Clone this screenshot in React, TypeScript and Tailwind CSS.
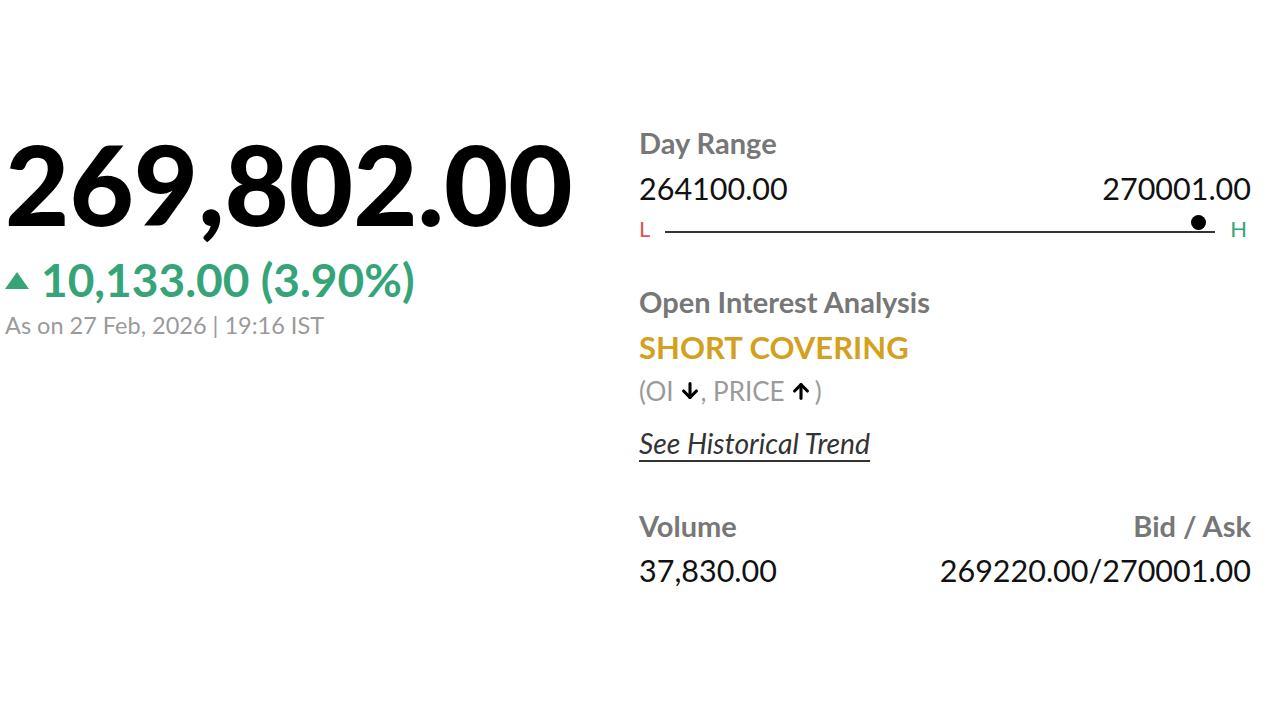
import React from "react";

const lato = { fontFamily: "Lato, 'Noto Sans', sans-serif" };

function ArrowDown() {
  return (
    <svg className="w-[22px] h-[22px] inline-block" viewBox="0 0 24 24" fill="none" stroke="#000" strokeWidth={3.4} strokeLinecap="round" strokeLinejoin="round">
      <path d="M12 4v15" />
      <path d="M5 12l7 7 7-7" />
    </svg>
  );
}

function ArrowUp() {
  return (
    <svg className="w-[22px] h-[22px] inline-block" viewBox="0 0 24 24" fill="none" stroke="#000" strokeWidth={3.4} strokeLinecap="round" strokeLinejoin="round">
      <path d="M12 20V5" />
      <path d="M5 12l7-7 7 7" />
    </svg>
  );
}

export default function App() {
  return (
    <div className="w-[1280px] h-[720px] bg-white text-black" style={lato}>
      <div className="flex pt-[118px] pl-[5px] pr-[29px]">
        {/* Left — price block */}
        <div className="w-[634px] shrink-0">
          <div className="text-[111px] font-black leading-[130px]">269,802.00</div>
          <div className="flex items-center gap-[12px] mt-[6px] text-[#35a478]">
            <span className="w-0 h-0 border-l-[12px] border-r-[12px] border-b-[17px] border-l-transparent border-r-transparent border-b-[#35a478]" />
            <span className="text-[46px] font-bold leading-[52px]">10,133.00 (3.90%)</span>
          </div>
          <div className="text-[23.5px] text-[#9a9a9a] leading-[30px] mt-[4px]">As on 27 Feb, 2026 | 19:16 IST</div>
        </div>

        {/* Right — stats */}
        <div className="flex-1 mt-[5px]">
          <div className="text-[29px] font-bold text-[#777777] leading-[40px]">Day Range</div>
          <div className="flex justify-between text-[30.5px] text-[#111] leading-[40px] mt-[5px]">
            <span>264100.00</span>
            <span>270001.00</span>
          </div>
          <div className="flex items-center h-[24px] mt-[10px]">
            <span className="text-[22px] text-[#e0524f] leading-[24px] w-[26px] mt-[-2px]">L</span>
            <div className="relative flex-1 h-[2px] bg-[#333] mt-[4px]">
              <span className="absolute right-[9px] top-[-16px] w-[15px] h-[15px] rounded-full bg-black" />
            </div>
            <span className="text-[22px] text-[#35a478] leading-[24px] w-[36px] text-right pr-[4px] mt-[-2px]">H</span>
          </div>

          <div className="text-[29px] font-bold text-[#777777] leading-[40px] mt-[40px]">Open Interest Analysis</div>
          <div className="text-[31px] font-bold text-[#d4a01d] leading-[40px] mt-[5px]">SHORT COVERING</div>
          <div className="flex items-center text-[26px] text-[#9a9a9a] leading-[36px] mt-[6px]">
            <span>(OI</span>
            <span className="ml-[5px] flex"><ArrowDown /></span>
            <span>, PRICE</span>
            <span className="ml-[5px] flex"><ArrowUp /></span>
            <span className="ml-[3px]">)</span>
          </div>
          <div className="mt-[14px] leading-[40px]">
            <a className="text-[28.3px] italic text-[#333] underline underline-offset-[6px] decoration-[2px] leading-[40px]">See Historical Trend</a>
          </div>

          <div className="flex justify-between mt-[38px]">
            <div>
              <div className="text-[29px] font-bold text-[#777777] leading-[40px]">Volume</div>
              <div className="text-[30.5px] text-[#111] leading-[40px] mt-[4px]">37,830.00</div>
            </div>
            <div className="text-right">
              <div className="text-[29px] font-bold text-[#777777] leading-[40px]">Bid / Ask</div>
              <div className="text-[30.5px] text-[#111] leading-[40px] mt-[4px]">269220.00/270001.00</div>
            </div>
          </div>
        </div>
      </div>
    </div>
  );
}
